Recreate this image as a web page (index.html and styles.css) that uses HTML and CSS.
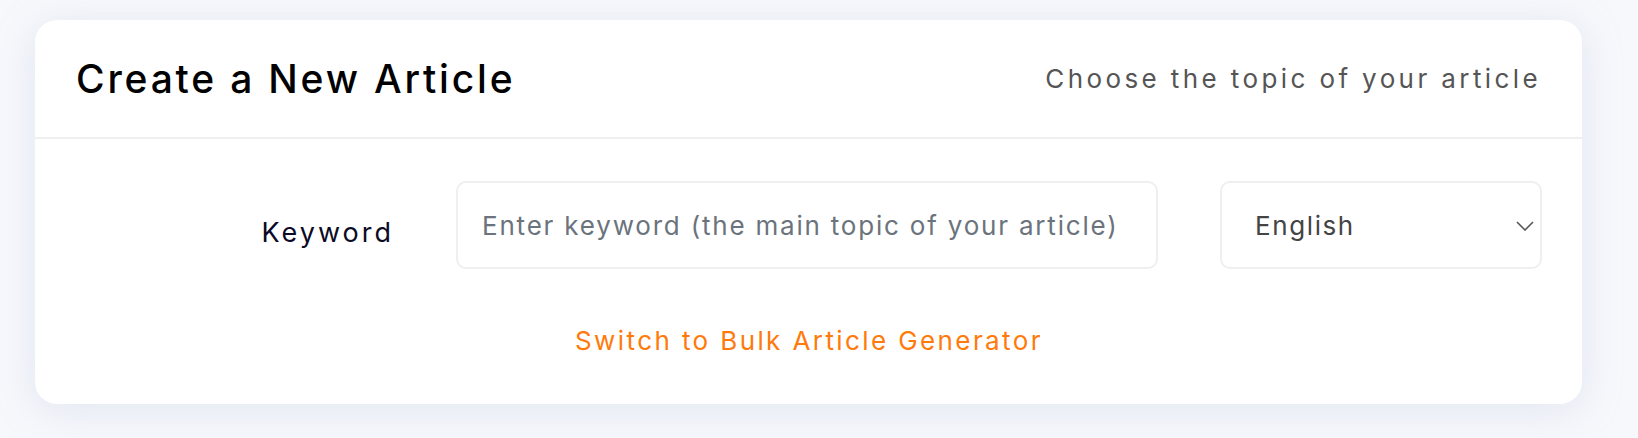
FILE: index.html
```html
<!DOCTYPE html>
<html lang="en">
<head>
    <meta charset="UTF-8">
    <meta name="viewport" content="width=device-width, initial-scale=1.0">
    <title>Create a New Article</title>
    <link rel="stylesheet" href="styles.css">
</head>
<body>
    <div class="card">
        <div class="card-head">
            <h1 class="title">Create a New Article</h1>
            <p class="subtitle">Choose the topic of your article</p>
        </div>
        <form class="card-body">
            <div class="row">
                <label class="label" for="keyword">Keyword</label>
                <input class="field keyword" type="text" id="keyword" name="keyword" placeholder="Enter keyword (the main topic of your article)">
                <div class="select-wrap">
                    <select class="field select" name="language">
                        <option>English</option>
                        <option>French</option>
                        <option>German</option>
                        <option>Spanish</option>
                    </select>
                    <svg class="chevron" width="18" height="10" viewBox="0 0 18 10">
                        <path d="M1 1 L9 9 L17 1" fill="none" stroke="#555" stroke-width="1.6"/>
                    </svg>
                </div>
            </div>
            <a class="switch" href="#">Switch to Bulk Article Generator</a>
        </form>
    </div>
</body>
</html>
```

FILE: styles.css
```css
*{
    margin: 0;
    box-sizing: border-box;
}
body
{
    background-color: #f7f8fc;
    padding: 20px 56px 34px 35px;
    font-family: Inter, "Noto Sans", sans-serif;
}
.card
{
    background-color: #fff;
    border-radius: 22px;
    box-shadow: 0 6px 40px rgba(170, 182, 212, 0.28);
}
.card-head
{
    height: 119px;
    display: flex;
    align-items: center;
    justify-content: space-between;
    padding: 0 41px;
    border-bottom: 2px solid #efefef;
}
.title
{
    font-size: 39px;
    font-weight: 500;
    letter-spacing: 2.8px;
    color: #000;
}
.subtitle
{
    font-size: 26px;
    letter-spacing: 3.4px;
    color: #555;
}
.card-body
{
    padding: 42px 40px 45px 41px;
    display: flex;
    flex-direction: column;
    align-items: center;
}
.row
{
    width: 100%;
    display: grid;
    grid-template-columns: 318px 702px 1fr;
    column-gap: 62px;
}
.label
{
    padding-top: 35px;
    text-align: right;
    font-size: 27px;
    letter-spacing: 3px;
    color: #0b0b25;
}
.field
{
    height: 88px;
    border: 2px solid #efefef;
    border-radius: 10px;
    padding: 0 24px;
    font-family: Inter, "Noto Sans", sans-serif;
    font-size: 26px;
    letter-spacing: 1.6px;
    color: #444;
    background: #fff;
    outline: none;
}
.keyword
{
    letter-spacing: 1.8px;
}
.field::placeholder
{
    color: #6b737d;
}
.select-wrap
{
    position: relative;
}
.select
{
    width: 100%;
    appearance: none;
    padding-left: 33px;
}
.chevron
{
    position: absolute;
    right: 8px;
    top: 40px;
    pointer-events: none;
}
.switch
{
    margin-top: 54px;
    font-size: 26px;
    letter-spacing: 2.4px;
    color: #ff7a0a;
    text-decoration: none;
    line-height: 36px;
}
```
